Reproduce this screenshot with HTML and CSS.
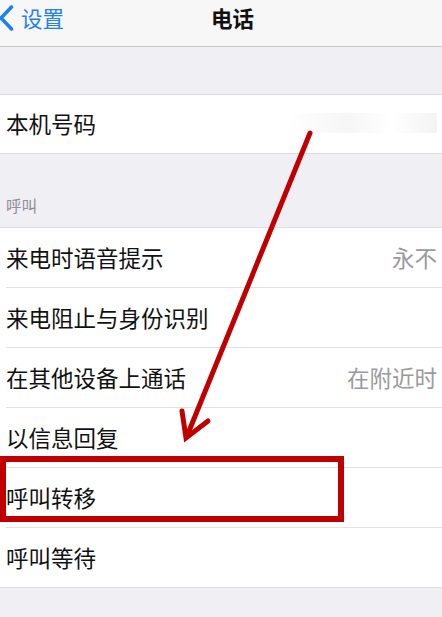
FILE: index.html
```html
<!DOCTYPE html>
<html lang="zh-CN">
<head>
<meta charset="utf-8">
<title>电话</title>
<link rel="stylesheet" href="styles.css">
</head>
<body>
<div class="page">
  <header class="nav">
    <a class="back">
      <svg class="chev" width="15" height="28" viewBox="0 0 15 28"><path d="M12.5 3 L2 14 L12.5 25" fill="none" stroke="#1f80f2" stroke-width="3.6" stroke-linecap="round" stroke-linejoin="round"/></svg>
      <span class="back-text">设置</span>
    </a>
    <h1 class="title">电话</h1>
  </header>
  <div class="spacer"></div>
  <section class="group">
    <div class="row"><span class="label">本机号码</span><span class="value blurred"></span></div>
  </section>
  <div class="section-head">呼叫</div>
  <section class="group">
    <div class="row"><span class="label">来电时语音提示</span><span class="value">永不</span></div>
    <div class="row"><span class="label">来电阻止与身份识别</span></div>
    <div class="row"><span class="label">在其他设备上通话</span><span class="value">在附近时</span></div>
    <div class="row"><span class="label">以信息回复</span></div>
    <div class="row"><span class="label">呼叫转移</span></div>
    <div class="row"><span class="label">呼叫等待</span></div>
  </section>
  <svg class="annot" width="442" height="617" viewBox="0 0 442 617">
    <line x1="310" y1="133" x2="187" y2="436" stroke="#c00000" stroke-width="5" stroke-linecap="round"/>
    <path d="M182 411 L186 438 L208 421" fill="none" stroke="#c00000" stroke-width="5" stroke-linejoin="miter" stroke-linecap="round"/>
    <rect x="3" y="459" width="338" height="60" fill="none" stroke="#c00000" stroke-width="6"/>
  </svg>
</div>
</body>
</html>
```
FILE: styles.css
```css
* { box-sizing: border-box; margin: 0; padding: 0; }
html, body { background: #efeff4; }
body {
  font-family: "Noto Sans CJK SC", "Noto Sans", sans-serif;
  color: #111;
  width: 442px;
  height: 617px;
  overflow: hidden;
}
.page { position: relative; width: 442px; height: 617px; }
.nav {
  height: 47px;
  background: #f7f7f8;
  border-bottom: 1px solid #c9c9cc;
  display: flex;
  align-items: flex-start;
  padding-top: 4px;
}
.back {
  display: flex;
  align-items: center;
  color: #1f80f2;
  height: 28px;
}
.chev { display: block; margin-left: -1px; }
.back-text { font-size: 21.5px; line-height: 28px; margin-left: 7px; }
.title {
  font-size: 21.5px;
  font-weight: 700;
  line-height: 28px;
  margin-left: 147px;
}
.spacer { height: 47px; }
.group {
  background: #fff;
  border-top: 1px solid #dcdce0;
  border-bottom: 1px solid #dcdce0;
  padding-left: 6px;
}
.row {
  height: 60px;
  display: flex;
  align-items: center;
  justify-content: space-between;
  padding-right: 5px;
  padding-bottom: 2px;
  border-bottom: 1px solid #e2e2e4;
}
.row:last-child { border-bottom: none; height: 59px; }
.group:first-of-type .row { height: 58px; }
.label { font-size: 22.5px; line-height: 30px; }
.value { font-size: 22.5px; line-height: 30px; color: #9a9a9e; }
.blurred {
  width: 150px;
  height: 20px;
  background: linear-gradient(90deg, #fff, #f6f6f6 40%, #fff 70%, #f3f3f3);
}
.section-head {
  height: 73px;
  display: flex;
  align-items: flex-end;
  padding: 0 0 11px 6px;
  font-size: 15.5px;
  color: #8e8e93;
}
.annot { position: absolute; left: 0; top: 0; pointer-events: none; }
```
